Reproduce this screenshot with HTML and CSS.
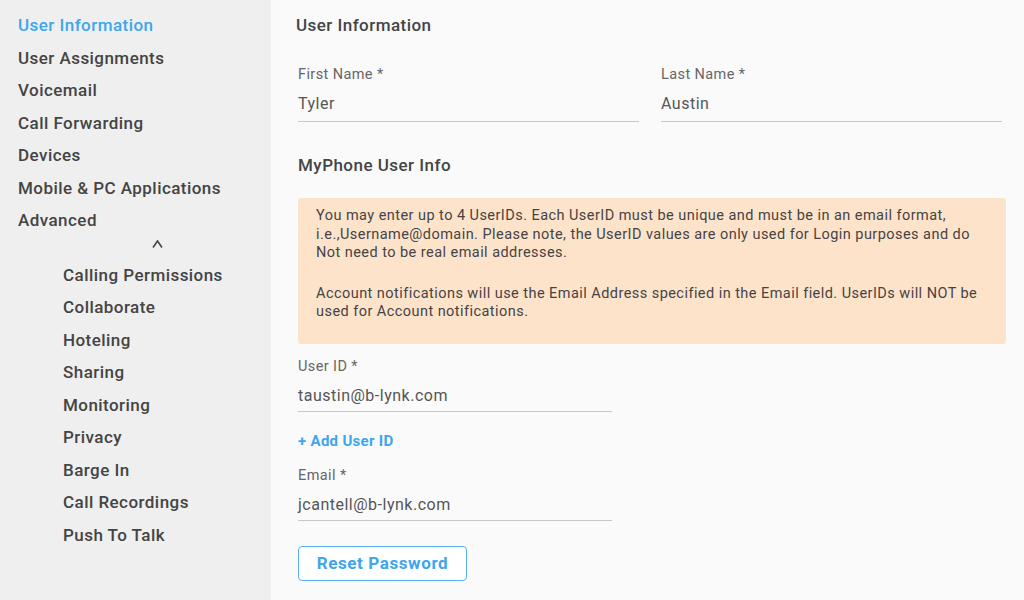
FILE: index.html
```html
<!DOCTYPE html>
<html lang="en">
<head>
    <meta charset="UTF-8">
    <title>User Information</title>
    <link rel="stylesheet" href="styles.css">
</head>
<body>
    <div class="layout">
        <nav class="sidebar">
            <a class="nav-item active" href="#">User Information</a>
            <a class="nav-item" href="#">User Assignments</a>
            <a class="nav-item" href="#">Voicemail</a>
            <a class="nav-item" href="#">Call Forwarding</a>
            <a class="nav-item" href="#">Devices</a>
            <a class="nav-item" href="#">Mobile &amp; PC Applications</a>
            <a class="nav-item" href="#">Advanced</a>
            <div class="collapse">
                <svg width="11" height="8" viewBox="0 0 11 8"><path d="M1 7.5 L5.5 1 L10 7.5" fill="none" stroke="#444" stroke-width="1.6"/></svg>
            </div>
            <div class="subnav">
                <a class="nav-item" href="#">Calling Permissions</a>
                <a class="nav-item" href="#">Collaborate</a>
                <a class="nav-item" href="#">Hoteling</a>
                <a class="nav-item" href="#">Sharing</a>
                <a class="nav-item" href="#">Monitoring</a>
                <a class="nav-item" href="#">Privacy</a>
                <a class="nav-item" href="#">Barge In</a>
                <a class="nav-item" href="#">Call Recordings</a>
                <a class="nav-item" href="#">Push To Talk</a>
            </div>
        </nav>

        <main class="content">
            <h2 class="page-title">User Information</h2>
            <div class="row">
                <div class="field">
                    <label>First Name *</label>
                    <div class="value">Tyler</div>
                </div>
                <div class="field">
                    <label>Last Name *</label>
                    <div class="value">Austin</div>
                </div>
            </div>

            <h3 class="section-title">MyPhone User Info</h3>
            <div class="notice">
                <p>You may enter up to 4 UserIDs. Each UserID must be unique and must be in an email format, i.e.,Username@domain. Please note, the UserID values are only used for Login purposes and do Not need to be real email addresses.</p>
                <p>Account notifications will use the Email Address specified in the Email field. UserIDs will NOT be used for Account notifications.</p>
            </div>

            <div class="field narrow">
                <label>User ID *</label>
                <div class="value">taustin@b-lynk.com</div>
            </div>
            <a class="add-link" href="#">+ Add User ID</a>
            <div class="field narrow">
                <label>Email *</label>
                <div class="value">jcantell@b-lynk.com</div>
            </div>
            <button class="btn-outline">Reset Password</button>
        </main>
    </div>
</body>
</html>
```

FILE: styles.css
```css
body { margin: 0; font-family: Roboto, "Liberation Sans", sans-serif; background-color: #fafafa; color: #444; }
a { text-decoration: none; }

.layout { display: flex; min-height: 600px; }

.sidebar { width: 271px; flex-shrink: 0; background-color: #efefef; padding: 9px 0 0 18px; box-sizing: border-box; display: flex; flex-direction: column; }
.nav-item { display: block; font-size: 17px; font-weight: 500; color: #444; line-height: 32.5px; letter-spacing: 0.45px; white-space: nowrap; }
.nav-item.active { color: #3ea6ec; }
.collapse { display: flex; justify-content: center; width: 280px; margin-left: -18px; height: 22px; align-items: flex-start; padding-top: 3px; box-sizing: border-box; }
.collapse svg { margin-left: 34px; }
.subnav { padding-left: 45px; }

.content { flex: 1; padding: 12px 20px 0 27px; }
.page-title { margin: 0 0 0 -2px; font-size: 17px; font-weight: 500; color: #444; line-height: 26px; letter-spacing: 0.45px; }
.section-title { margin: 30px 0 20px; font-size: 17px; font-weight: 500; color: #444; line-height: 26px; letter-spacing: 0.47px; }

.row { display: flex; gap: 22px; margin-top: 27px; padding-right: 2px; }
.row .field { flex: 1; }

.field label { display: block; font-size: 14.5px; color: #666; line-height: 20px; letter-spacing: 0.4px; }
.field .value { font-size: 16px; color: #555; line-height: 20px; padding: 9px 0 7px; border-bottom: 1px solid #c8c8c8; letter-spacing: 0.5px; }
.field.narrow { width: 314px; }
.field.narrow .value { padding: 9px 0 5px; }

.notice { background-color: #fee3cb; border-radius: 3px; padding: 9px 18px 22px; margin-bottom: 13px; margin-right: -2px; }
.notice p { margin: 0; font-size: 14.5px; line-height: 18.5px; color: #444; letter-spacing: 0.45px; }
.notice p + p { margin-top: 22px; }

.add-link { display: inline-block; font-size: 15px; font-weight: 700; color: #3ea6ec; margin: 19px 0 15px; line-height: 20px; letter-spacing: 0.3px; }

.btn-outline { display: block; margin-top: 25px; width: 169px; height: 35px; background: #fff; border: 1px solid #5ab4ef; border-radius: 4px; color: #3ea6ec; font-family: Roboto, "Liberation Sans", sans-serif; font-size: 17px; font-weight: 700; letter-spacing: 0.6px; cursor: pointer; }
```
